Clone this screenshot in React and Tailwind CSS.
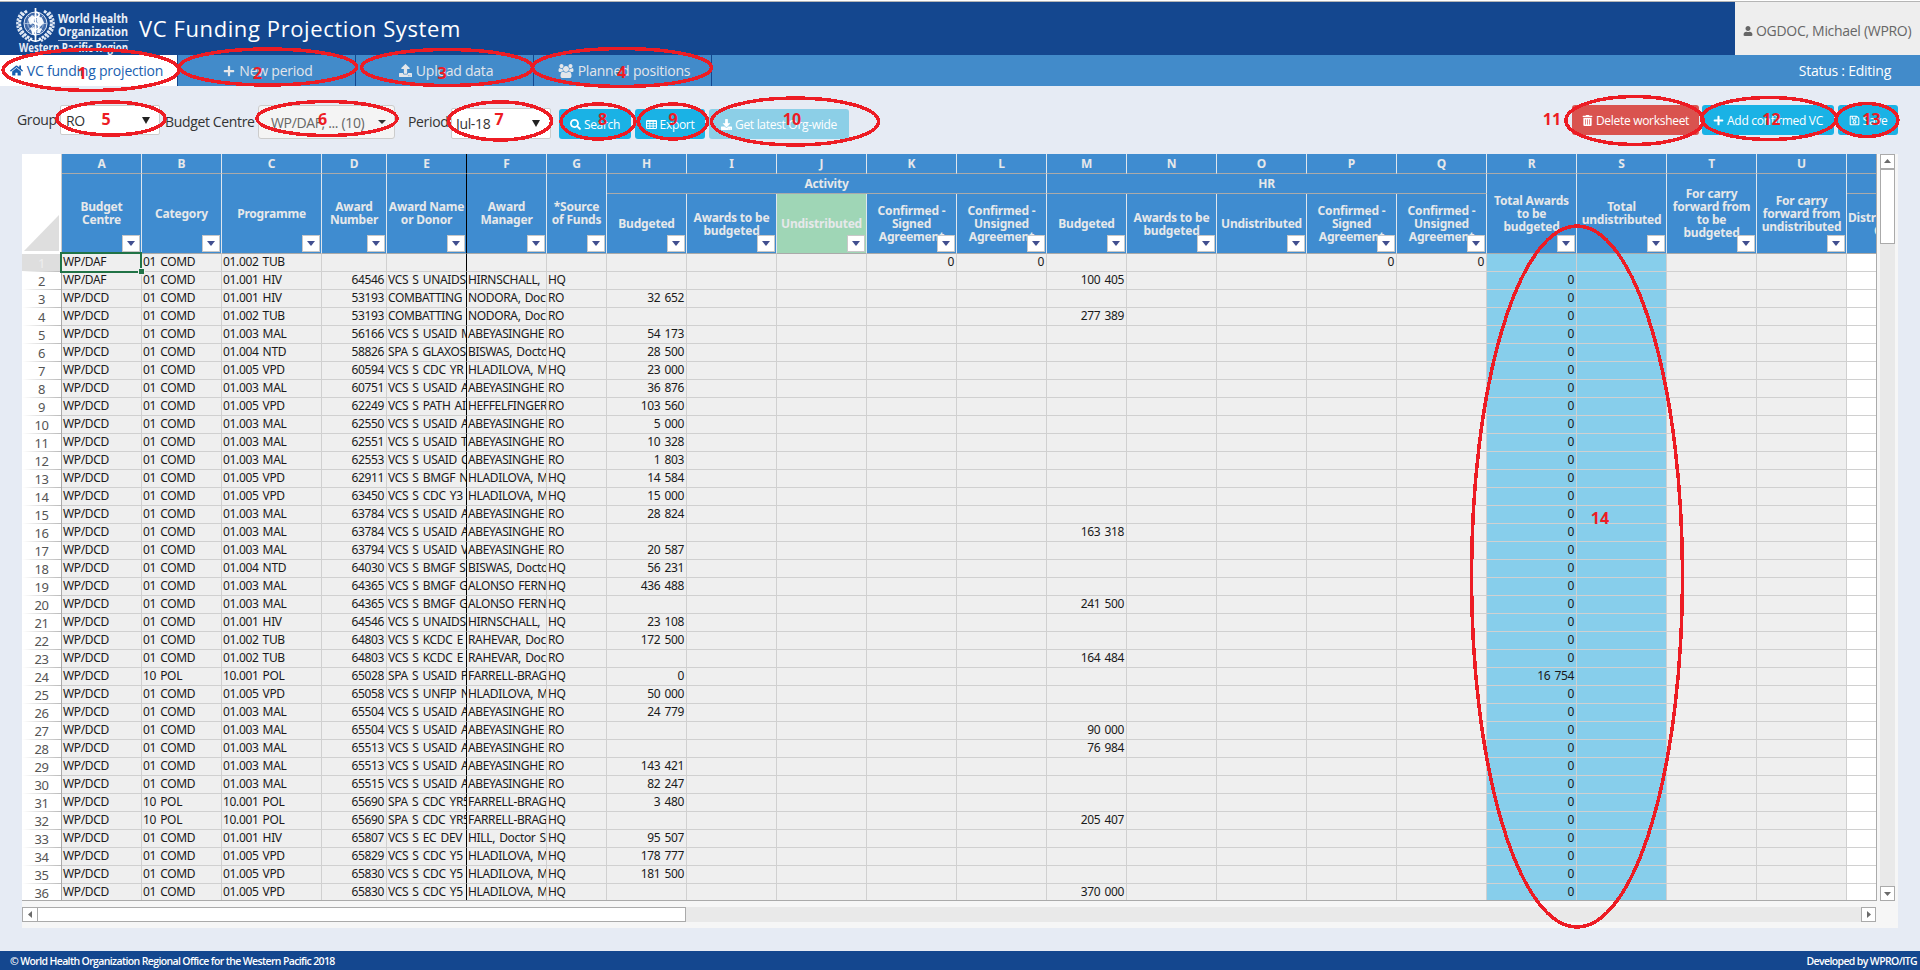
import React from "react";
import { FaPlus, FaUpload, FaHome, FaSearch, FaDownload, FaTrashAlt, FaRegSave, FaUser } from "react-icons/fa";

const COLS =
  "grid grid-cols-[40px_80px_80px_100px_65px_80px_80px_60px_80px_90px_90px_90px_90px_80px_90px_90px_90px_90px_90px_90px_90px_90px_90px]";

const LETTERS = "ABCDEFGHIJKLMNOPQRSTU".split("");

const D = "WP/DCD";
const C1 = "01 COMD";
const C10 = "10 POL";
const HIV = "01.001 HIV";
const TUB = "01.002 TUB";
const MAL = "01.003 MAL";
const NTD = "01.004 NTD";
const VPD = "01.005 VPD";
const POL = "10.001 POL";
const ABE = "ABEYASINGHE";
const HLA = "HLADILOVA, M";

// centre, category, programme, award, donor, manager, source, H, M, R
const ROWS = [
  ["WP/DAF", C1, TUB, "", "", "", "", "", "", ""],
  ["WP/DAF", C1, HIV, "64546", "VCS S UNAIDS", "HIRNSCHALL,", "HQ", "", "100 405", "0"],
  [D, C1, HIV, "53193", "COMBATTING C", "NODORA, Doct", "RO", "32 652", "", "0"],
  [D, C1, TUB, "53193", "COMBATTING C", "NODORA, Doct", "RO", "", "277 389", "0"],
  [D, C1, MAL, "56166", "VCS S USAID M", ABE, "RO", "54 173", "", "0"],
  [D, C1, NTD, "58826", "SPA S GLAXOS", "BISWAS, Docto", "HQ", "28 500", "", "0"],
  [D, C1, VPD, "60594", "VCS S CDC YR", HLA, "HQ", "23 000", "", "0"],
  [D, C1, MAL, "60751", "VCS S USAID A", ABE, "RO", "36 876", "", "0"],
  [D, C1, VPD, "62249", "VCS S PATH AI", "HEFFELFINGER", "RO", "103 560", "", "0"],
  [D, C1, MAL, "62550", "VCS S USAID A", ABE, "RO", "5 000", "", "0"],
  [D, C1, MAL, "62551", "VCS S USAID T", ABE, "RO", "10 328", "", "0"],
  [D, C1, MAL, "62553", "VCS S USAID C", ABE, "RO", "1 803", "", "0"],
  [D, C1, VPD, "62911", "VCS S BMGF N", HLA, "HQ", "14 584", "", "0"],
  [D, C1, VPD, "63450", "VCS S CDC Y3", HLA, "HQ", "15 000", "", "0"],
  [D, C1, MAL, "63784", "VCS S USAID A", ABE, "RO", "28 824", "", "0"],
  [D, C1, MAL, "63784", "VCS S USAID A", ABE, "RO", "", "163 318", "0"],
  [D, C1, MAL, "63794", "VCS S USAID V", ABE, "RO", "20 587", "", "0"],
  [D, C1, NTD, "64030", "VCS S BMGF S", "BISWAS, Docto", "HQ", "56 231", "", "0"],
  [D, C1, MAL, "64365", "VCS S BMGF G", "ALONSO FERN", "HQ", "436 488", "", "0"],
  [D, C1, MAL, "64365", "VCS S BMGF G", "ALONSO FERN", "HQ", "", "241 500", "0"],
  [D, C1, HIV, "64546", "VCS S UNAIDS", "HIRNSCHALL,", "HQ", "23 108", "", "0"],
  [D, C1, TUB, "64803", "VCS S KCDC E", "RAHEVAR, Doc", "RO", "172 500", "", "0"],
  [D, C1, TUB, "64803", "VCS S KCDC E", "RAHEVAR, Doc", "RO", "", "164 484", "0"],
  [D, C10, POL, "65028", "SPA S USAID P", "FARRELL-BRAG", "HQ", "0", "", "16 754"],
  [D, C1, VPD, "65058", "VCS S UNFIP N", HLA, "HQ", "50 000", "", "0"],
  [D, C1, MAL, "65504", "VCS S USAID A", ABE, "RO", "24 779", "", "0"],
  [D, C1, MAL, "65504", "VCS S USAID A", ABE, "RO", "", "90 000", "0"],
  [D, C1, MAL, "65513", "VCS S USAID A", ABE, "RO", "", "76 984", "0"],
  [D, C1, MAL, "65513", "VCS S USAID A", ABE, "RO", "143 421", "", "0"],
  [D, C1, MAL, "65515", "VCS S USAID A", ABE, "RO", "82 247", "", "0"],
  [D, C10, POL, "65690", "SPA S CDC YR5", "FARRELL-BRAG", "HQ", "3 480", "", "0"],
  [D, C10, POL, "65690", "SPA S CDC YR5", "FARRELL-BRAG", "HQ", "", "205 407", "0"],
  [D, C1, HIV, "65807", "VCS S EC DEV", "HILL, Doctor S", "HQ", "95 507", "", "0"],
  [D, C1, VPD, "65829", "VCS S CDC Y5", HLA, "HQ", "178 777", "", "0"],
  [D, C1, VPD, "65830", "VCS S CDC Y5", HLA, "HQ", "181 500", "", "0"],
  [D, C1, VPD, "65830", "VCS S CDC Y5", HLA, "HQ", "", "370 000", "0"],
];

const ELLIPSES = [
  [91, 70, 88, 20.5], [268, 67, 88.5, 18], [447, 67.5, 85.5, 18], [622, 67.5, 89.5, 19],
  [111, 118.5, 54, 16.5], [327, 118.5, 70, 17], [500, 121, 51.5, 19], [598, 121.5, 37, 17.5],
  [673, 121.5, 34.5, 17.5], [795, 121.5, 83.5, 23.5], [1634.5, 120.5, 68.5, 24],
  [1769, 118.5, 67.5, 21], [1867, 120, 31, 16.5], [1577, 576.5, 105.5, 350.5],
];
const MARKS = [
  [82, 79], [257.5, 79], [442, 79], [621.5, 78], [106, 125], [322.5, 125], [499, 125], [602.5, 125],
  [673, 125], [792, 125], [1552, 125], [1771.5, 125], [1871.5, 125], [1600, 524],
];

function UsersIcon({ className }) {
  return (
    <svg viewBox="0 0 1920 1792" fill="currentColor" className={className}>
      <path d="M593 896q-162 5-265 128h-134q-82 0-138-40.500t-56-118.500q0-353 124-353 6 0 43.500 21t97.500 42.500 119 21.500q67 0 133-23-5 37-5 66 0 139 81 256zm1071 637q0 120-73 189.500t-194 69.500h-874q-121 0-194-69.500t-73-189.500q0-53 3.500-103.500t14-109 26.500-108.500 43-97.500 62-81 85.500-53.500 111.500-20q10 0 43 21.500t73 48 107 48 135 21.500 135-21.500 107-48 73-48 43-21.500q61 0 111.500 20t85.500 53.500 62 81 43 97.500 26.500 108.500 14 109 3.500 103.500zm-1024-1277q0 106-75 181t-181 75-181-75-75-181 75-181 181-75 181 75 75 181zm704 384q0 159-112.500 271.500t-271.500 112.500-271.500-112.500-112.500-271.500 112.500-271.500 271.500-112.500 271.500 112.500 112.500 271.500zm576 225q0 78-56 118.500t-138 40.500h-134q-103-123-265-128 81-117 81-256 0-29-5-66 66 23 133 23 59 0 119-21.500t97.500-42.500 43.500-21q124 0 124 353zm-128-609q0 106-75 181t-181 75-181-75-75-181 75-181 181-75 181 75 75 181z" />
    </svg>
  );
}

function TableIcon({ className }) {
  return (
    <svg viewBox="0 0 12 10" fill="none" stroke="currentColor" className={className}>
      <rect x="0.6" y="0.6" width="10.800" height="8.800" rx="0.8" strokeWidth="1.200" />
      <path d="M0.600 1.300h10.800" strokeWidth="1.500" />
      <path d="M4.200 1v8.500M7.800 1v8.500M0.600 4h10.800M0.600 6.700h10.800" />
    </svg>
  );
}

function Logo() {
  return (
    <svg width="134" height="54" viewBox="0 0 134 54" className="block shrink-0" fill="none">
      <circle cx="35.500" cy="22.500" r="11.500" fill="#3f68a8" stroke="#dfe8f5" strokeWidth="1" />
      <g stroke="#b9cbe5" strokeWidth="0.8">
        <circle cx="35.500" cy="22.500" r="7.800" />
        <circle cx="35.500" cy="22.500" r="4" />
        <path d="M24 22.500h23M27.500 14.500l16 16M43.500 14.500l-16 16" />
      </g>
      <path d="M28 18l4-4 3 2-1 5-4 3zM37 15l5 2 2 5-4 4-3-5zM30 27l4-1 2 4-3 3zM38 27l4 1-2 4-3 0z" fill="#f3f7fc" />
      <path d="M35.500 7v34" stroke="#fff" strokeWidth="1.700" />
      <path d="M35.500 11c5 1 5 4.500 0 5.500s-5 5 0 6 4.500 5 0 6-3.500 4.500 0 5.500" stroke="#fff" strokeWidth="1.500" />
      <g stroke="#e6edf7" strokeWidth="3" strokeDasharray="2.800 1">
        <path d="M27 10C16 17 17 31 32 38.500" />
        <path d="M44 10c11 7 10 21-5 28.500" />
      </g>
      <g stroke="#dbe5f2" strokeWidth="2.400" strokeDasharray="2.400 1.300">
        <path d="M22 11C14 20 16 33 30 40" />
        <path d="M49 11c8 9 6 22-8 29" />
      </g>
      <path d="M30 38c3 3 8 3 11 0" stroke="#fff" strokeWidth="1.400" />
      <path d="M58 39.500h70.500" stroke="#9db4d8" />
      <g fill="#e9eff8" className="font-['Open_Sans',sans-serif] font-bold">
        <text x="58" y="21.500" fontSize="13" textLength="70" lengthAdjust="spacingAndGlyphs">World Health</text>
        <text x="58" y="34.500" fontSize="13" textLength="70" lengthAdjust="spacingAndGlyphs">Organization</text>
        <text x="19" y="51" fontSize="11.500" textLength="109" lengthAdjust="spacingAndGlyphs">Western Pacific Region</text>
      </g>
    </svg>
  );
}

function Tab({ icon: Icon, children, active, iconClass = "size-[13px]" }) {
  return (
    <div
      className={
        "flex h-[31px] w-[178px] items-center justify-center border-r border-[#14478f] text-[14px] " +
        (active ? "bg-white pr-1 text-[#1a5fb0]" : "pl-[3px] text-[#e3e6ea]")
      }
    >
      <Icon className={"mr-1 shrink-0 " + iconClass} />
      <span className="tracking-[-0.22px] whitespace-nowrap">{children}</span>
    </div>
  );
}

function Button({ icon: Icon, children, className }) {
  return (
    <div className={"flex h-[30px] items-center justify-center rounded-[3px] pt-px text-[12px] tracking-[-0.3px] text-white " + className}>
      <Icon className="mr-[3px] size-[11px] shrink-0" />
      <span className="whitespace-nowrap">{children}</span>
    </div>
  );
}

function Filter() {
  return (
    <span className="absolute right-[1px] bottom-[1px] flex h-[17px] w-[18px] items-center justify-center border border-[#c8c8c8] bg-white">
      <svg width="8" height="5" viewBox="0 0 8 5"><path d="M0 0h8L4 5z" fill="#414f8f" /></svg>
    </span>
  );
}

function Head({ lines, className = "", filter = true }) {
  return (
    <div className={"relative flex flex-col items-center justify-center overflow-hidden border-r border-b border-r-[#dfe6ee] border-b-[#aaa] leading-[13px] whitespace-nowrap " + className}>
      {lines.map((l) => (
        <span key={l}>{l}</span>
      ))}
      {filter && <Filter />}
    </div>
  );
}

const SIX = [
  { l: ["Budgeted"] },
  { l: ["Awards to be", "budgeted"] },
  { l: ["Undistributed"] },
  { l: ["Confirmed -", "Signed", "Agreement"] },
  { l: ["Confirmed -", "Unsigned", "Agreement"] },
];

function SheetHeader() {
  const tall = "row-span-2 pb-px";
  return (
    <div className={COLS + " grid-rows-[20px_20px_60px] bg-[#3f8cd0] text-[12px] font-bold tracking-[-0.2px] text-[#e6e8ea]"}>
      <div className="row-span-3 flex items-end justify-end border-r border-[#ccc] bg-white pr-[2px] pb-[3px]">
        <svg width="35" height="36" viewBox="0 0 35 36"><path d="M35 0v36H0z" fill="#dedede" /></svg>
      </div>
      {LETTERS.map((c) => (
        <div key={c} className={"flex items-center justify-center border-r border-b border-b-[#aaa] " + (c === "E" ? "border-r-black" : "border-r-[#dfe6ee]")}>
          {c}
        </div>
      ))}
      <div className="border-b border-b-[#aaa]" />
      <Head className={tall} lines={["Budget", "Centre"]} />
      <Head className={tall} lines={["Category"]} />
      <Head className={tall} lines={["Programme"]} />
      <Head className={tall} lines={["Award", "Number"]} />
      <Head className={tall + " border-r-black!"} lines={["Award Name", "or Donor"]} />
      <Head className={tall} lines={["Award", "Manager"]} />
      <Head className={tall} lines={["*Source", "of Funds"]} />
      <Head className="col-span-5" lines={["Activity"]} filter={false} />
      <Head className="col-span-5" lines={["HR"]} filter={false} />
      <Head className={tall} lines={["Total Awards", "to be", "budgeted"]} />
      <Head className={tall} lines={["Total", "undistributed"]} />
      <Head className={tall} lines={["For carry", "forward from", "to be", "budgeted"]} />
      <Head className={tall} lines={["For carry", "forward from", "undistributed"]} />
      <div className="border-b border-b-[#aaa]" />
      {SIX.map((h, i) => (
        <Head key={"a" + i} lines={h.l} className={i === 2 ? "bg-[#9fd6b6]" : ""} />
      ))}
      {SIX.map((h, i) => (
        <Head key={"h" + i} lines={h.l} />
      ))}
      <div className="overflow-hidden border-b border-b-[#aaa] pt-[17px] pl-[1px] leading-[13px] whitespace-nowrap">
        <div>Distr</div>
        <div className="pl-[26px]">C</div>
      </div>
    </div>
  );
}

function Cell({ children, right, className = "bg-[#efefef] border-r-[#d0d0d0]" }) {
  return (
    <div className={"overflow-hidden border-r border-b border-b-[#d0d0d0] leading-[16px] whitespace-nowrap " + (right ? "pr-[2px] text-right " : "pl-px ") + className}>
      {children}
    </div>
  );
}

function Row({ r, n }) {
  const z = n === 1 ? "0" : "";
  const sky = "bg-[#87ceeb] border-r-[#d0d0d0]";
  return (
    <div className={COLS + " auto-rows-[18px] text-[12px] tracking-[-0.35px] text-[#1a1a1a] [word-spacing:1.4px]"}>
      <div className={"flex flex-col border-r border-[#aaa] " + (n === 1 ? "bg-[#dedede]" : "bg-white")}>
        <div className={"h-[17px] text-center text-[13px] leading-[19px] " + (n === 1 ? "text-[#eee]" : "text-[#555]")}>{n}</div>
        <div className="h-px bg-linear-to-r from-white to-[#bbb]" />
      </div>
      <Cell>{r[0]}</Cell>
      <Cell>{r[1]}</Cell>
      <Cell>{r[2]}</Cell>
      <Cell right>{r[3]}</Cell>
      <Cell className="border-r-black bg-[#efefef]">{r[4]}</Cell>
      <Cell>{r[5]}</Cell>
      <Cell>{r[6]}</Cell>
      <Cell right>{r[7]}</Cell>
      <Cell />
      <Cell />
      <Cell right>{z}</Cell>
      <Cell right>{z}</Cell>
      <Cell right>{r[8]}</Cell>
      <Cell />
      <Cell />
      <Cell right>{z}</Cell>
      <Cell right>{z}</Cell>
      <Cell right className={sky}>{r[9]}</Cell>
      <Cell className={sky} />
      <Cell />
      <Cell />
      <Cell className="border-r-white bg-white" />
    </div>
  );
}

function ScrollButton({ d, className = "" }) {
  return (
    <div className={"flex size-[15px] shrink-0 items-center justify-center border border-[#aaa] bg-white " + className}>
      <svg width="7" height="7" viewBox="0 0 7 7"><path d={d} fill="#6b6b6b" /></svg>
    </div>
  );
}

export default function App() {
  return (
    <div className="relative flex h-[970px] w-[1920px] flex-col overflow-hidden bg-[#e6ebf4] font-['Open_Sans','Noto_Sans',sans-serif]">
      <header className="flex h-[55px] border-t border-white bg-[#14478f] shadow-[inset_0_1px_0_#b5b5b5]">
        <Logo />
        <h1 className="w-[1601px] pt-[7px] pl-[5px] text-[22px] leading-[40px] tracking-[0.6px] text-white">VC Funding Projection System</h1>
        <div className="mt-px flex flex-1 items-center bg-[#eee] pt-1 pl-2 text-[14px] text-[#666]">
          <FaUser className="mr-[3px] size-[10px]" />
          <span className="tracking-[-0.3px] whitespace-nowrap">OGDOC, Michael (WPRO)</span>
        </div>
      </header>

      <nav className="flex h-[31px] bg-[#428bca]">
        <Tab icon={FaHome} active>VC funding projection</Tab>
        <Tab icon={FaPlus} iconClass="size-[12px]">New period</Tab>
        <Tab icon={FaUpload}>Upload data</Tab>
        <Tab icon={UsersIcon} iconClass="h-[14px] w-[16px]">Planned positions</Tab>
        <div className="ml-auto pr-[29px] text-[14px] leading-[32px] tracking-[-0.25px] text-white">Status : Editing</div>
      </nav>

      <div className="flex h-[68px] items-start pt-[19px] text-[14px] tracking-[-0.35px] text-[#333]">
        <div className="w-[60px] pl-[17px] leading-[29px]">Group</div>
        <div className="flex h-[30px] w-[100px] items-center justify-between rounded-[2px] border border-[#ccc] bg-white px-[5px]">
          <span>RO</span>
          <svg width="8" height="7" viewBox="0 0 8 7" className="mr-[4px]"><path d="M0 0h8L4 7z" fill="#222" /></svg>
        </div>
        <div className="w-[98px] pl-[5px] leading-[34px] whitespace-nowrap">Budget Centre</div>
        <div className="flex h-[34px] w-[137px] items-center justify-between rounded-[3px] border border-[#ccc] bg-[#f4f4f4] pr-[8px] pl-[12px] text-[#666]">
          <span>WP/DAF, ... (10)</span>
          <svg width="8" height="4" viewBox="0 0 8 4"><path d="M0 0h8L4 4z" fill="#333" /></svg>
        </div>
        <div className="w-[56px] pl-[13px] leading-[34px]">Period</div>
        <div className="mt-[3px] flex h-[31px] w-[100px] items-center justify-between rounded-[2px] border border-[#ccc] bg-white px-[4px]">
          <span>Jul-18</span>
          <svg width="8" height="7" viewBox="0 0 8 7" className="mr-[6px]"><path d="M0 0h8L4 7z" fill="#222" /></svg>
        </div>
        <Button icon={FaSearch} className="mt-1 ml-2 w-[72px] bg-[#1ab2e5]">Search</Button>
        <Button icon={TableIcon} className="mt-1 ml-1 w-[70px] bg-[#1ab2e5]">Export</Button>
        <Button icon={FaDownload} className="mt-1 ml-1 w-[140px] bg-[#8ccfe7]">Get latest Org-wide</Button>
        <div className="ml-auto flex pr-[22px]">
          <Button icon={FaTrashAlt} className="w-[127px] bg-[#d9534f]">Delete worksheet</Button>
          <Button icon={FaPlus} className="ml-[3px] w-[132px] bg-[#1ab2e5]">Add confirmed VC</Button>
          <Button icon={FaRegSave} className="ml-1 w-[60px] bg-[#1ab2e5]">Save</Button>
        </div>
      </div>

      <main className="ml-[22px] flex h-[774px] w-[1876px] flex-col bg-[#f6f6f6] font-['Noto_Sans',sans-serif]">
        <div className="flex h-[747px]">
          <div className="relative w-[1855px] shrink-0 overflow-hidden border-r border-b border-[#aaa] bg-white">
            <SheetHeader />
            {ROWS.map((r, i) => (
              <Row key={i} r={r} n={i + 1} />
            ))}
            <div className="absolute top-[98px] left-[38px] h-[21px] w-[82px] border-2 border-[#217346]" />
            <div className="absolute top-[115px] left-[117px] size-[5px] bg-[#217346] outline outline-[#efefef]" />
          </div>
          <div className="ml-[3px] flex w-[15px] flex-col bg-[#e9e9e9]">
            <ScrollButton d="M0 5h7L3.500 1z" />
            <div className="h-[75px] border border-[#aaa] bg-white" />
            <ScrollButton d="M0 2h7L3.500 6z" className="mt-auto" />
          </div>
        </div>
        <div className="mt-[6px] flex h-[15px] w-[1854px] bg-[#e9e9e9]">
          <ScrollButton d="M5 0v7L1 3.500z" className="border-r-0" />
          <div className="w-[649px] border border-[#aaa] bg-white" />
          <ScrollButton d="M2 0v7L6 3.500z" className="ml-auto" />
        </div>
      </main>

      <footer className="mt-auto flex h-[19px] items-center justify-between bg-[#14478f] pt-[2px] pr-[3px] pl-[10px] text-[10.5px] font-semibold tracking-[-0.63px] text-white">
        <span>© World Health Organization Regional Office for the Western Pacific 2018</span>
        <span>Developed by WPRO/ITG</span>
      </footer>

      <svg className="pointer-events-none absolute inset-0" width="1920" height="970" viewBox="0 0 1920 970">
        <g fill="none" stroke="#ed1c24" strokeWidth="3.500" shapeRendering="crispEdges">
          {ELLIPSES.map(([cx, cy, rx, ry], i) => (
            <ellipse key={i} cx={cx} cy={cy} rx={rx} ry={ry} />
          ))}
        </g>
        <g fill="#ed1c24" fontSize="16" fontWeight="700" textAnchor="middle">
          {MARKS.map(([x, y], i) => (
            <text key={i} x={x} y={y}>{i + 1}</text>
          ))}
        </g>
      </svg>
    </div>
  );
}
